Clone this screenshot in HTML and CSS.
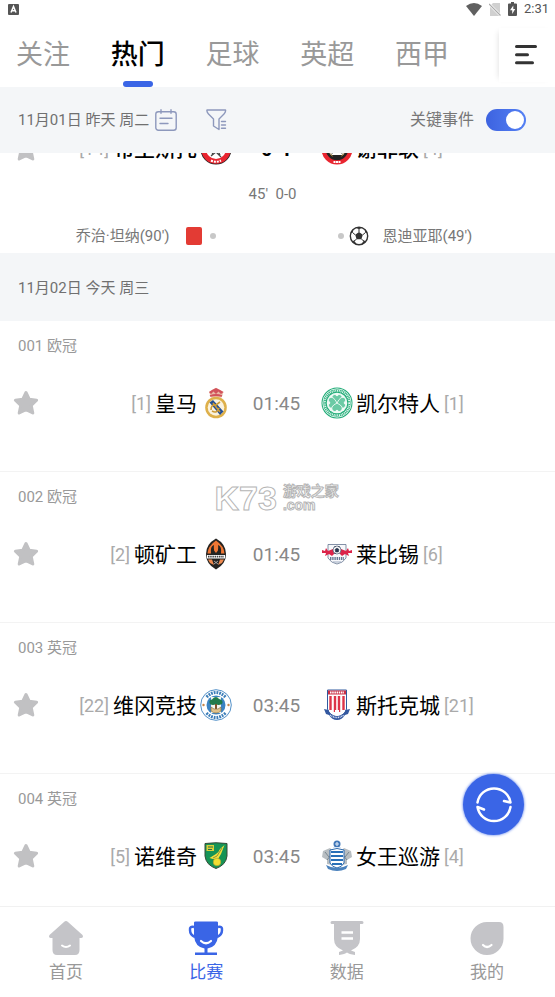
FILE: index.html
```html
<!DOCTYPE html>
<html lang="zh-CN">
<head>
<meta charset="utf-8">
<meta name="viewport" content="width=device-width, initial-scale=1">
<title>比赛</title>
<link rel="stylesheet" href="styles.css">
</head>
<body>
<svg class="defs" aria-hidden="true">
  <symbol id="star" viewBox="0 0 26 26"><path d="M13 2.500L16.200 9.200L23.600 10.200L18.200 15.400L19.800 23L13 19.700L6.200 23L7.800 15.400L2.400 10.200L9.800 9.200Z" fill="currentColor" stroke="currentColor" stroke-width="3" stroke-linejoin="round"/></symbol>
</svg>
<div class="app">
  <div class="status">
    <svg width="11" height="11" viewBox="0 0 11 11"><rect width="11" height="11" rx="1" fill="#555"/><path d="M3 8.500L5.500 2.500L8 8.500M4 6.700H7" fill="none" stroke="#fff" stroke-width="1.500"/></svg>
    <div class="status-right">
      <svg width="16" height="13" viewBox="0 0 16 13"><path d="M0 3Q8-3 16 3L8 13Z" fill="#606060"/></svg>
      <svg width="12" height="13" viewBox="0 0 12 13"><path d="M4 0H11V13H1V3Z" fill="#d0d0d0"/><path d="M0 1L12 13" stroke="#fff" stroke-width="2.500"/><path d="M0 1L11.500 12.500" stroke="#aaa" stroke-width="1.200"/></svg>
      <svg width="9" height="14" viewBox="0 0 9 14"><path d="M1 1.500H3V0H6V1.500H8Q9 1.500 9 2.500V13Q9 14 8 14H1Q0 14 0 13V2.500Q0 1.500 1 1.500Z" fill="#555"/><path d="M5.300 3.500L2 8.300H4.200V12L7.200 7H5.300Z" fill="#fff"/></svg>
      <time>2:31</time>
    </div>
  </div>
  <header class="tabs">
    <nav class="tab-list">
      <button class="tab">关注</button>
      <button class="tab active">热门</button>
      <button class="tab">足球</button>
      <button class="tab">英超</button>
      <button class="tab">西甲</button>
    </nav>
    <button class="menu" aria-label="菜单">
      <svg width="22" height="20" viewBox="0 0 22 20"><path d="M1.500 1.500H20.500M1.500 9.700H12.500M1.500 17.800H17.500" stroke="#333" stroke-width="3" stroke-linecap="round"/></svg>
    </button>
  </header>
  <div class="toolbar">
    <span class="date">11月01日 昨天 周二</span>
    <button class="tool" aria-label="日历">
      <svg width="22" height="22" viewBox="0 0 22 22" fill="none" stroke="#8d98bc" stroke-width="1.400" stroke-linecap="round"><rect x=".8" y="2.800" width="20.400" height="18.400" rx="2.500"/><path d="M6 .8V4.300M16 .8V4.300M5 9.300H17M5 14.500H13"/></svg>
    </button>
    <button class="tool filter" aria-label="筛选">
      <svg width="21" height="22" viewBox="0 0 21 22" fill="none" stroke="#8d98bc" stroke-width="1.400" stroke-linejoin="round" stroke-linecap="round"><path d="M1 1H19.500Q20 3 18 5L13 10V20.500L7.500 17V10L2.500 5Q.5 3 1 1Z"/><path d="M15.500 12.500H19.500M15.500 16H19.500M15.500 19.300H19.500"/></svg>
    </button>
    <label class="switch-label" for="events">关键事件</label>
    <input class="switch" id="events" type="checkbox" checked>
  </div>
  <main class="list">
    <section class="match first">
      <div class="teams">
        <button class="star" aria-label="收藏"><svg width="26" height="26"><use href="#star"/></svg></button>
        <div class="home"><span class="rank">[14]</span><b class="name">布里斯托</b></div>
        <svg class="crest" viewBox="0 0 32 32"><circle cx="16" cy="16" r="15.500" fill="#222"/><circle cx="16" cy="16" r="14.800" fill="#e92530"/><circle cx="16" cy="16" r="10" fill="#fff"/><path d="M9 19L14 16L12 22M16 14L20 22M19 14L23 20M11 23L16 19L21 24" fill="none" stroke="#444" stroke-width="1.200"/><path d="M11 27.500Q16 30 21 27.500" fill="none" stroke="#fff" stroke-width="2" stroke-dasharray="2 1"/></svg>
        <strong class="score">0-1</strong>
        <svg class="crest" viewBox="0 0 32 32"><circle cx="16" cy="16" r="15.500" fill="#e92530"/><circle cx="16" cy="16" r="11.300" fill="#222"/><path d="M9 12L23 21M23 12L9 21" stroke="#ddd" stroke-width="1.500"/><path d="M16 13L18 18L22 22H10L14 18Z" fill="#fff"/><path d="M8 19L12 24M24 19L20 24" stroke="#cda33c" stroke-dasharray="2 1"/><path d="M12.500 29H19.500" stroke="#fff" stroke-width="2" stroke-dasharray="2 .5"/></svg>
        <div class="away"><b class="name">谢菲联</b><span class="rank">[4]</span></div>
      </div>
      <div class="half">45'&nbsp; 0-0</div>
      <div class="events">
        <div class="event home-event"><span>乔治·坦纳(90')</span><i class="red-card"></i><i class="dot"></i></div>
        <div class="event"><i class="dot"></i>
          <svg class="ball" width="20" height="20" viewBox="0 0 20 20"><circle cx="10" cy="10" r="8.700" fill="#fff" stroke="#333" stroke-width="1.400"/><path d="M10 6L13.800 8.800L12.400 13.200H7.600L6.200 8.800ZM6.500 1.500L10 3.300L13.500 1.500L10 .9ZM1.200 8L3.700 6.500L4.600 3.100L2.500 5ZM18.800 8L16.300 6.500L15.400 3.100L17.500 5ZM3 15.500L5 14.500L8 18.500L5.500 17.800ZM17 15.500L15 14.500L12 18.500L14.500 17.800Z" fill="#333"/><path d="M10 3V6M3.500 6.500L6.200 8.800M16.500 6.500L13.800 8.800M5 15L7.600 13.200M15 15L12.400 13.200" stroke="#333"/></svg>
          <span>恩迪亚耶(49')</span></div>
      </div>
    </section>
    <h2 class="day">11月02日 今天 周三</h2>
    <section class="match">
      <div class="league">001 欧冠</div>
      <div class="teams">
        <button class="star" aria-label="收藏"><svg width="26" height="26"><use href="#star"/></svg></button>
        <div class="home"><span class="rank">[1]</span><span class="name">皇马</span></div>
        <svg class="crest" viewBox="0 0 32 32"><path d="M11 10.500L9 5L12 3L16 .8L20 3L23.500 5L21.500 10.500Z" fill="#eab9a6"/><path d="M9 5L12 3L16 1L20 3L23.500 5L21 7L18.500 4.500L16 7L13.500 4.500L11 7Z" fill="#d2525c"/><path d="M10 9Q16 7 22 9" fill="none" stroke="#d2525c" stroke-width="1.800"/><circle cx="16" cy="20.500" r="10.800" fill="#deb04b"/><circle cx="16" cy="20.500" r="8.300" fill="#faf2df"/><path d="M9.500 15.500L13 13L23.500 24.500L20 28Z" fill="#244e94"/><path d="M11 23Q11 17 16 18L20 15M12 24Q17 27 19 21M13 16L20 25" fill="none" stroke="#cc9a36" stroke-width="1.600"/></svg>
        <time class="kickoff">01:45</time>
        <svg class="crest" viewBox="0 0 32 32"><circle cx="16" cy="16" r="15.500" fill="#24ad79"/><circle cx="16" cy="16" r="14.200" fill="none" stroke="#fff" stroke-width=".8"/><circle cx="16" cy="16" r="12.300" fill="none" stroke="#e2f6ed" stroke-width="2" stroke-dasharray="1 .8"/><circle cx="16" cy="16" r="10.300" fill="#f0fbf6"/><g fill="#6bcaa5" stroke="#fff" stroke-width=".8"><path d="M16 16Q8 12 12 8Q14 6 16 9Q18 6 20 8Q24 12 16 16Z"/><path d="M16 16Q12 24 8 20Q6 18 9 16Q6 13 8 11Q12 8 16 16Z"/><path d="M16 16Q20 24 24 20Q26 18 23 16Q26 13 24 11Q20 8 16 16Z"/><path d="M16 16Q8 20 12 24Q14 26 16 23Q18 26 20 24Q24 20 16 16Z"/></g></svg>
        <div class="away"><span class="name">凯尔特人</span><span class="rank">[1]</span></div>
      </div>
    </section>
    <section class="match">
      <div class="league">002 欧冠</div>
      <div class="teams">
        <button class="star" aria-label="收藏"><svg width="26" height="26"><use href="#star"/></svg></button>
        <div class="home"><span class="rank">[2]</span><span class="name">顿矿工</span></div>
        <svg class="crest" viewBox="0 0 32 32"><path d="M16 .5Q26 6 26 16Q26 26 16 31.500Q6 26 6 16Q6 6 16 .5Z" fill="#242321"/><path d="M16 2.500Q24 8 24.500 15.500H7.500Q8 8 16 2.500Z" fill="#ee7634"/><path d="M11 16Q10 8 14 7Q13 12 16 15Q19 12 18 7Q22 8 21 16Z" fill="#242321"/><path d="M16 6Q20 11 16 14Q12 11 16 6Z" fill="#ee7634"/><path d="M7 17H25V20.500H7Z" fill="#fff"/><path d="M8 18.700H24" stroke="#444" stroke-width="1.800" stroke-dasharray="1.500 .7"/><path d="M8 21.500H12L14 27L10 25ZM24 21.500H20L18 27L22 25Z" fill="#ee8a50"/><path d="M14 23L18 26M18 23L14 26" stroke="#bbb" stroke-width=".8"/></svg>
        <time class="kickoff">01:45</time>
        <svg class="crest" viewBox="0 0 32 32"><path d="M7 6.500H25V20Q22 25 16 26Q10 25 7 20Z" fill="#f7f8fb" stroke="#65758f" stroke-width=".8"/><path d="M1 12L4 13L5 10L7 13L12 11L15 14L11 18L8 16L4 18L5 15L1 15ZM31 12L28 13L27 10L25 13L20 11L17 14L21 18L24 16L28 18L27 15L31 15Z" fill="#db244a"/><circle cx="16" cy="12" r="4" fill="#fff" stroke="#43526b" stroke-width=".7"/><path d="M16 10L18 11.500L17.300 14H14.700L14 11.500ZM13 9L15 8.500M19 9L17 8.500M13 15L15 15.500" fill="#26354d" stroke="#26354d" stroke-width=".6"/><path d="M9 20.500H23" stroke="#667894" stroke-width="3" stroke-dasharray="1.400 .8"/><path d="M12 24H20" stroke="#9dabc0"/></svg>
        <div class="away"><span class="name">莱比锡</span><span class="rank">[6]</span></div>
      </div>
    </section>
    <section class="match">
      <div class="league">003 英冠</div>
      <div class="teams">
        <button class="star" aria-label="收藏"><svg width="26" height="26"><use href="#star"/></svg></button>
        <div class="home"><span class="rank">[22]</span><span class="name">维冈竞技</span></div>
        <svg class="crest" viewBox="0 0 32 32"><circle cx="16" cy="16" r="15.300" fill="#fff" stroke="#5290c8" stroke-width="1"/><path d="M6.500 8Q16-1 25.500 8M6.500 24Q16 33 25.500 24" fill="none" stroke="#3b7db8" stroke-width="3" stroke-dasharray="1.800 1"/><circle cx="16" cy="16" r="9.500" fill="#3b83c2"/><path d="M11 8H21V24H11Z" fill="#f3f6ef"/><path d="M10 15Q8 11 12 10.500Q16 6 19 10Q24 11 22 15Q18 17 16 15Q13 17 10 15Z" fill="#207b4c"/><path d="M16 15V20" stroke="#7f542c" stroke-width="2"/><path d="M11 18L14 20H18L21 18V22Q16 26 11 22Z" fill="#dfc28b" stroke="#8a7345" stroke-width=".7"/><circle cx="3.500" cy="16" r="1.200" fill="#c68547"/><circle cx="28.500" cy="16" r="1.200" fill="#c68547"/></svg>
        <time class="kickoff">03:45</time>
        <svg class="crest" viewBox="0 0 32 32"><path d="M6.500 1H25.500V20Q24 26 16 28Q8 26 6.500 20Z" fill="#fff" stroke="#315a9f" stroke-width="1"/><path d="M7 1.500H25V5.500H7Z" fill="#cc3147"/><path d="M9 3.500H23" stroke="#fff" stroke-width="1.800" stroke-dasharray="1.500 .7"/><path d="M9.500 7V21M14 7V23M18 7V23M22.500 7V21" stroke="#dd3449" stroke-width="2.400"/><path d="M14 21H18V25H14Z" fill="#fff"/><path d="M3 20L7.500 21Q9 27 16 27Q23 27 24.500 21L29 20L27 25L24 26Q21 31 16 31Q11 31 8 26L5 25Z" fill="#3358a0"/><path d="M9 26Q16 31 23 26" fill="none" stroke="#dce5f5" stroke-width="1.500" stroke-dasharray="1 .7"/></svg>
        <div class="away"><span class="name">斯托克城</span><span class="rank">[21]</span></div>
      </div>
    </section>
    <section class="match">
      <div class="league">004 英冠</div>
      <div class="teams">
        <button class="star" aria-label="收藏"><svg width="26" height="26"><use href="#star"/></svg></button>
        <div class="home"><span class="rank">[5]</span><span class="name">诺维奇</span></div>
        <svg class="crest" viewBox="0 0 32 32"><path d="M5 3.500Q16 2 27 3.500V16Q26 25 16 28.500Q6 25 5 16Z" fill="#159456" stroke="#344a37"/><path d="M6.500 5H14V11H6.500Z" fill="#dbcf39"/><path d="M8 7H13M8 9.500H12" stroke="#28724a" stroke-width="1"/><path d="M24.500 5L21 14L18 19H13L9.500 18L16 14Q19 12 20 9Z" fill="#f3df3b"/><path d="M22 8L17 16L13 18" fill="none" stroke="#69803c" stroke-width=".8"/><circle cx="17" cy="22" r="3.800" fill="#f2df32" stroke="#ad9d2c" stroke-width=".6"/></svg>
        <time class="kickoff">03:45</time>
        <svg class="crest" viewBox="0 0 32 32"><path d="M9 8L2 11L1 17L6 20V24L11 25V10ZM23 8L30 11L31 17L26 20V24L21 25V10Z" fill="#b8bec2"/><path d="M4 12L8 17M28 12L24 17M6 20L10 15M26 20L22 15" stroke="#79868e"/><circle cx="16" cy="4" r="3.500" fill="#4177b8"/><path d="M14 4H18M16 2V6M12 7.500H20" stroke="#d9e5f4" stroke-width="1.200"/><path d="M9 10Q16 7 23 10V23Q21 27 16 28Q11 27 9 23Z" fill="#fff" stroke="#2c69ad"/><path d="M10 12H22M10 16H22M10 20H22M11 24H21" stroke="#2970b8" stroke-width="2.200"/><path d="M5 25Q16 31 27 25L25 29Q16 33 7 29Z" fill="#4b82bd"/></svg>
        <div class="away"><span class="name">女王巡游</span><span class="rank">[4]</span></div>
      </div>
    </section>
    <div class="watermark" aria-hidden="true"><span class="mark">K73</span><span class="mark-side"><span>游戏之家</span><span>.com</span></span></div>
  </main>
  <button class="refresh" aria-label="刷新">
    <svg width="38" height="38" viewBox="0 0 38 38" fill="none" stroke="#fff" stroke-width="2.500" stroke-linecap="round" stroke-linejoin="round"><path d="M2.500 16.500A16.700 16.700 0 0 1 35.500 16.500L29 15M35.500 21A16.700 16.700 0 0 1 2.500 21L9 23.500"/></svg>
  </button>
  <nav class="bottom">
    <a href="#home"><svg width="36" height="36" viewBox="0 0 36 36"><path d="M16 2Q18 0 20 2L34.500 15Q36 17.500 33 18H31.500V30Q31.500 35 27 35H9Q4.500 35 4.500 30V18H3Q0 17.500 1.500 15Z" fill="#c4c4c8"/><path d="M14 25.500Q18 28.500 22 25.500" fill="none" stroke="#fff" stroke-width="2" stroke-linecap="round"/></svg><span>首页</span></a>
    <a href="#matches" class="current"><svg width="36" height="36" viewBox="0 0 36 36"><path d="M6 2.500Q6 1.500 7.500 1.500H28.500Q30 1.500 30 2.500V16Q29 27 19.500 28.500V32.500H29V35H7V32.500H16.500V28.500Q7 27 6 16Z" fill="#3a65e6"/><path d="M6 7Q1.500 6 2 10Q2 15 7 17M30 7Q34.500 6 34 10Q34 15 29 17" fill="none" stroke="#3a65e6" stroke-width="2.500"/><path d="M13 21Q18 25.500 23 21" fill="none" stroke="#fff" stroke-width="2.200" stroke-linecap="round"/></svg><span>比赛</span></a>
    <a href="#data"><svg width="36" height="36" viewBox="0 0 36 36"><path d="M3 1H33Q34.500 1 34.500 2.500T33 4H31V19Q31 27 22 30.500L26 32V35Q20 34 18 32.500Q16 34 10 35V32L14 30.500Q5 27 5 19V4H3Q1.500 4 1.500 2.500T3 1Z" fill="#c4c4c8"/><path d="M12.500 12.500H24M12.500 18.500H24" stroke="#fff" stroke-width="2.500"/></svg><span>数据</span></a>
    <a href="#mine"><svg width="36" height="36" viewBox="0 0 36 36"><path d="M18 2H30Q34.500 2 34.500 7V19A16.500 16.500 0 1 1 18 2Z" fill="#c4c4c8"/><path d="M14 25Q18 29 22.500 25" fill="none" stroke="#fff" stroke-width="2.200" stroke-linecap="round"/></svg><span>我的</span></a>
  </nav>
</div>
</body>
</html>
```
FILE: styles.css
```css
* { box-sizing: border-box; }
body {
  margin: 0;
  background: #fff;
  color: #777;
  font-family: Roboto, "Noto Sans CJK SC", sans-serif;
  font-size: 15px;
  line-height: 22px;
}
button {
  display: flex;
  padding: 0;
  border: 0;
  background: none;
  font: inherit;
  color: inherit;
  cursor: pointer;
}
svg { display: block; flex: none; }
.defs { position: absolute; width: 0; height: 0; }
.app {
  position: relative;
  display: flex;
  flex-direction: column;
  height: 100vh;
}

.status {
  display: flex;
  align-items: center;
  justify-content: space-between;
  height: 18px;
  padding: 0 6px 0 8px;
}
.status-right {
  display: flex;
  align-items: center;
  gap: 7px;
  color: #555;
  font-size: 13px;
  line-height: 18px;
}

.tabs { display: flex; height: 69px; }
.tab-list { display: flex; flex: 1; justify-content: space-between; padding: 0 50px 0 16px; }
.tab {
  flex-direction: column;
  align-items: center;
  padding-top: 17px;
  color: #999;
  font-size: 27px;
  line-height: 40px;
}
.tab.active { color: #000; font-weight: 500; }
.tab.active::after {
  content: "";
  width: 30px;
  height: 6px;
  margin-top: 6px;
  border-radius: 3px;
  background: #3a65e6;
}
.menu {
  align-items: center;
  align-self: flex-start;
  width: 56px;
  height: 54px;
  margin-top: 10px;
  padding-left: 16px;
  box-shadow: -4px 0 6px -4px #ddd;
}

.toolbar {
  display: flex;
  align-items: center;
  height: 66px;
  padding: 0 29px 0 18px;
  background: #f4f6f8;
}
.date, .day { color: #707070; }
.tool { margin-left: 6px; }
.filter { margin-left: 29px; }
.switch-label { margin-left: auto; color: #777; font-size: 16px; }
.switch {
  appearance: none;
  display: flex;
  width: 40px;
  height: 22px;
  margin: 0 0 0 12px;
  padding: 2px;
  border-radius: 11px;
  background: #aaa;
}
.switch:checked { justify-content: flex-end; background: linear-gradient(90deg, #3d63e0, #5480f4); }
.switch::before { content: ""; width: 18px; height: 18px; border-radius: 50%; background: #fff; }

.list { position: relative; flex: 1; min-height: 0; overflow: hidden; }
.match { padding: 14px 0 52px; border-bottom: 1px solid #f3f3f3; }
/* The list is scrolled so that this match sits partly under the toolbar. */
.match.first { margin-top: -20px; padding: 0 0 6px; border: 0; }
.league { padding-left: 18px; color: #999; }
.teams {
  display: grid;
  grid-template-columns: 40px minmax(0, 1fr) 38px 83px 38px minmax(0, 1fr) 40px;
  align-items: center;
  height: 32px;
  margin-top: 30px;
  padding-right: 2px;
}
.first .teams { margin-top: 0; }
.star { margin-bottom: 2px; padding-left: 13px; color: #c1c1c3; }
.home, .away { display: flex; align-items: center; gap: 4px; white-space: nowrap; }
.home { justify-content: flex-end; }
.name { color: #000; font-size: 21px; font-weight: 400; line-height: 32px; }
b.name { font-weight: 500; }
.rank { color: #aaa; font-size: 18px; }
.crest { width: 32px; height: 32px; margin-bottom: 2px; justify-self: center; }
.first .star, .first .crest { margin-bottom: 0; }
.kickoff, .score { text-align: center; line-height: 32px; }
.kickoff { color: #888; font-size: 19px; }
.score { color: #000; font-size: 20px; }
.half { margin-top: 18px; padding-right: 10px; text-align: center; }
.events {
  display: grid;
  grid-template-columns: 1fr 1fr;
  gap: 122px;
  margin-top: 20px;
  padding-right: 2px;
}
.event { display: flex; align-items: center; }
.home-event { justify-content: flex-end; }
.dot { width: 6px; height: 6px; border-radius: 50%; background: #c8c8c8; }
.red-card { width: 16px; height: 18px; margin: 0 8px 0 16px; border-radius: 2px; background: #e33b34; }
.ball { margin: 0 14px 0 5px; }
.day {
  margin: 0;
  padding: 24px 18px 22px;
  background: #f4f6f8;
  font-size: 15px;
  font-weight: 400;
}

.watermark {
  position: absolute;
  top: 329px;
  left: 50%;
  display: flex;
  align-items: center;
  gap: 6px;
  margin-left: -63px;
  color: #fff;
  font-family: "Liberation Sans", "Noto Sans CJK SC", sans-serif;
  font-weight: 700;
  -webkit-text-stroke: 1px #b5b5b5;
}
.mark { font-size: 34px; line-height: 32px; }
.mark-side { display: flex; flex-direction: column; font-size: 14px; line-height: 14px; }

.refresh {
  position: absolute;
  right: 31px;
  bottom: 162px;
  align-items: center;
  justify-content: center;
  width: 61px;
  height: 61px;
  border-radius: 50%;
  background: #3a65e6;
  box-shadow: 0 0 3px #3a65e6;
}

.bottom {
  display: flex;
  justify-content: space-between;
  height: 91px;
  padding: 13px 50px 0 48px;
  border-top: 1px solid #f1f1f1;
}
.bottom a {
  display: flex;
  flex-direction: column;
  align-items: center;
  gap: 3px;
  color: #999;
  font-size: 17px;
  line-height: 26px;
  text-decoration: none;
}
.bottom .current { color: #3a65e6; }
```
